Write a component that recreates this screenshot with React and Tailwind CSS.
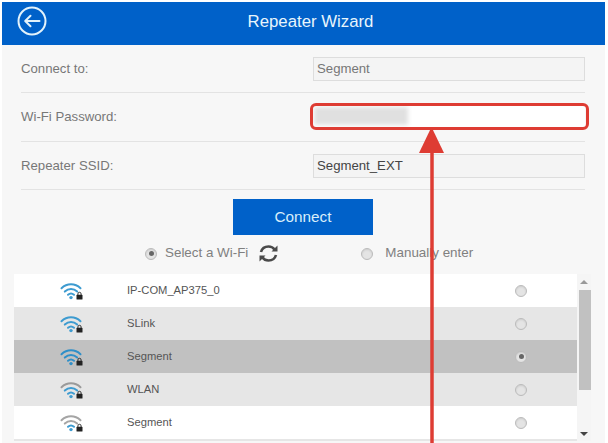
import React from 'react';

function WifiIcon({ top, mid, low }) {
    return (
        <svg width="24" height="18" viewBox="0 0 24 18" fill="none" strokeLinecap="round">
            <path d="M1.5 6.2C7 1 15 1 20.5 6.2" stroke={top} strokeWidth="2" />
            <path d="M4.8 9.6C8.5 6.2 13.5 6.2 17.2 9.6" stroke={mid} strokeWidth="2" />
            <path d="M8 12.8C9.8 11.2 12.2 11.2 14 12.8" stroke={low} strokeWidth="2" />
            <circle cx="11" cy="15.6" r="1.7" fill={low} />
            <rect x="16.5" y="12.8" width="6" height="4.8" rx="0.6" fill="#222" />
            <path d="M17.9 13V11.9a1.6 1.6 0 0 1 3.2 0V13" stroke="#222" strokeWidth="0.9" />
        </svg>
    );
}

function Radio({ checked }) {
    return (
        <span className="flex h-[12px] w-[12px] items-center justify-center rounded-full border border-[#bbbbbb] bg-[#e4e4e4] shadow-[inset_0_1px_2px_rgba(0,0,0,0.1)]">
            {checked && <span className="h-[5px] w-[5px] rounded-full bg-[#666666]" />}
        </span>
    );
}

function FormRow({ label, height, children }) {
    return (
        <div className={`flex items-center justify-between border-b border-[#e3e3e3] ${height}`}>
            <span className="text-[13.2px] text-[#777777]">{label}</span>
            {children}
        </div>
    );
}

const networks = [
    { name: 'IP-COM_AP375_0', bg: 'bg-white', top: '#3d9bd0', mid: '#3d9bd0', low: '#3d9bd0' },
    { name: 'SLink', bg: 'bg-[#e6e6e6]', top: '#3d9bd0', mid: '#3d9bd0', low: '#3d9bd0' },
    { name: 'Segment', bg: 'bg-[#c1c1c1]', top: '#2f8fc8', mid: '#2f8fc8', low: '#2f8fc8', checked: true },
    { name: 'WLAN', bg: 'bg-[#e6e6e6]', top: '#9a9a9a', mid: '#3d9bd0', low: '#3d9bd0' },
    { name: 'Segment', bg: 'bg-white', top: '#a5a5a5', mid: '#a5a5a5', low: '#3d9bd0' },
];

export default function App() {
    return (
        <div className="relative h-[443px] w-[608px] overflow-hidden bg-white pl-[2px] pr-[3px] pt-[2px] font-['Liberation_Sans',Arial,sans-serif]">
            <div className="h-full bg-[#f7f7f7]">
                {/* Header */}
                <header className="relative flex h-[43px] items-center justify-center bg-[#0061c9]">
                    <svg className="absolute left-[15px] top-[4px]" width="30" height="30" viewBox="0 0 30 30" fill="none" stroke="#e2f2fb" strokeWidth="2" strokeLinecap="round" strokeLinejoin="round">
                        <circle cx="15" cy="15" r="13.5" />
                        <path d="M22.5 15H8.5M13.5 9.8L8.2 15l5.3 5.2" />
                    </svg>
                    <h1 className="-mt-[4px] ml-[14px] text-[16.8px] text-[#e8f5fc]">Repeater Wizard</h1>
                </header>

                {/* Form */}
                <div className="ml-[19px] w-[564px]">
                    <FormRow label="Connect to:" height="h-[48px]">
                        <div className="flex h-[24px] w-[272px] items-center border border-[#dddddd] bg-[#f4f4f4] px-[3px] text-[13.2px] text-[#777777]">Segment</div>
                    </FormRow>
                    <FormRow label="Wi-Fi Password:" height="h-[49px]">
                        <div className="h-[24px] w-[272px] bg-white" />
                    </FormRow>
                    <FormRow label="Repeater SSID:" height="h-[48px]">
                        <div className="flex h-[24px] w-[272px] items-center border border-[#dddddd] bg-[#f4f4f4] px-[3px] text-[13.2px] text-[#444444]">Segment_EXT</div>
                    </FormRow>
                </div>

                {/* Connect button */}
                <div className="mt-[9px] flex justify-center pr-[1px]">
                    <button className="h-[36px] w-[140px] bg-[#0061c9] text-[15.3px] text-[#d9eefa]">Connect</button>
                </div>

                {/* Mode selection */}
                <div className="flex h-[37px] items-center text-[13.4px] text-[#808080]">
                    <span className="ml-[143px]"><Radio checked /></span>
                    <span className="ml-[8px]">Select a Wi-Fi</span>
                    <svg className="ml-[10px]" width="21" height="19" viewBox="0 0 21 19" fill="none" stroke="#4a4a4a" strokeWidth="2.6">
                        <path d="M3 8C4 4.5 7 2.5 10.5 2.5c2.600 0 4.800 1.200 6 3" />
                        <path d="M18 11c-1 3.500-4 5.500-7.500 5.500-2.600 0-4.800-1.200-6-3" />
                        <path d="M19.500 1.500v6h-6z" fill="#4a4a4a" strokeWidth="0" />
                        <path d="M1.500 17.500v-6h6z" fill="#4a4a4a" strokeWidth="0" />
                    </svg>
                    <span className="ml-[82px]"><Radio /></span>
                    <span className="ml-[12px]">Manually enter</span>
                </div>

                {/* Wi-Fi list */}
                <div className="ml-[12px] flex h-[169px] w-[577px] overflow-hidden pt-[2px]">
                    <div className="w-[563px]">
                        {networks.map((n, i) => (
                            <div key={i} className={`flex h-[33px] items-center ${n.bg}`}>
                                <span className="ml-[46px] flex w-[67px]">
                                    <WifiIcon top={n.top} mid={n.mid} low={n.low} />
                                </span>
                                <span className="text-[11.2px] text-[#555555]">{n.name}</span>
                                <span className="ml-auto mr-[50px]"><Radio checked={n.checked} /></span>
                            </div>
                        ))}
                        <div className="h-[33px] bg-[#e6e6e6]" />
                    </div>
                    <div className="relative w-[14px] bg-[#f5f5f5]">
                        <span className="absolute left-[3px] top-[6px] h-0 w-0 border-x-[4px] border-b-[4px] border-x-transparent border-b-[#999999]" />
                        <div className="ml-[2px] mt-[16px] h-[100px] w-[12px] bg-[#c1c1c1]" />
                        <span className="absolute left-[3px] top-[158px] h-0 w-0 border-x-[4px] border-t-[4px] border-x-transparent border-t-[#444444]" />
                    </div>
                </div>
            </div>

            {/* Blurred password */}
            <div className="absolute left-[314px] top-[107px] h-[18px] w-[94px] bg-[#e0e0e0] blur-[2px]" />

            {/* Red annotation */}
            <div className="absolute left-[310px] top-[103px] h-[27px] w-[279px] rounded-[6px] border-[3px] border-[#de3c33]" />
            <svg className="absolute left-[410px] top-[126px]" width="44" height="317" viewBox="0 0 44 317" fill="none">
                <path d="M21.500 1L34 27H9z" fill="#de3c33" />
                <path d="M22 20V317" stroke="#de3c33" strokeWidth="3.500" />
            </svg>
        </div>
    );
}
